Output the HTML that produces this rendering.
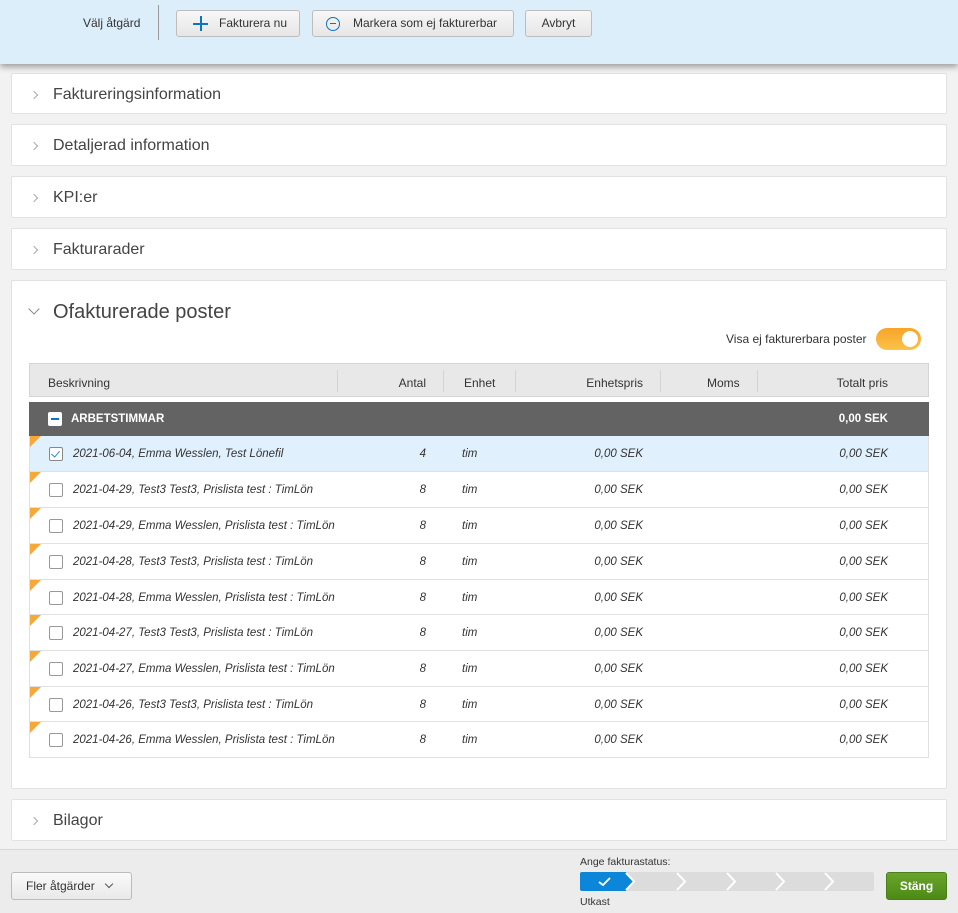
<!DOCTYPE html><html><head><style>
*{box-sizing:border-box;margin:0;padding:0}
body{width:958px;height:913px;background:#f2f2f2;font-family:"Liberation Sans",sans-serif;color:#333;position:relative;overflow:hidden;font-size:12px}
.top{position:absolute;left:0;top:0;width:958px;height:64px;background:#ddeefb;box-shadow:0 3px 6px rgba(0,0,0,.35);z-index:2}
.btn{position:absolute;top:10px;height:27px;border:1px solid #bdbdbd;border-radius:3px;background:linear-gradient(#f7f7f7,#e6e6e6);font-size:12px;color:#333;line-height:25px}
.panel{position:absolute;left:11px;width:936px;background:#fff;border:1px solid #e2e2e2;border-radius:2px}
.ph{font-size:16px;color:#444;position:absolute;left:41px}
.chev{position:absolute;left:19px;width:6px;height:6px;border-right:1.2px solid #aaa;border-top:1.2px solid #aaa;transform:rotate(45deg)}
.tbl{position:absolute;left:29px;width:900px}
.row{position:absolute;left:0;width:898px;height:36px;border-bottom:1px solid #e0e0e0;font-style:italic;font-size:11.5px;color:#333;background:#fff}
.row span,.hd span{position:absolute;top:12px}
.cb{position:absolute;left:19px;top:11px;width:14px;height:14px;border:1px solid #999;border-radius:2px;background:#fff}
.tri{position:absolute;left:0;top:0;width:0;height:0;border-top:11px solid #f6a93b;border-right:11px solid transparent}
.r{text-align:right}
</style></head><body>
<div class="top">
 <div style="position:absolute;left:83px;top:16px;font-size:12px;color:#333">Välj åtgärd</div>
 <div style="position:absolute;left:158px;top:5px;width:1px;height:35px;background:#999"></div>
 <div class="btn" style="left:176px;width:124px"><span style="position:absolute;left:16px;top:5px;width:15px;height:15px"><i style="position:absolute;left:7px;top:0;width:1.6px;height:15px;background:#0b74c4"></i><i style="position:absolute;left:0;top:7px;width:15px;height:1.6px;background:#0b74c4"></i></span><span style="position:absolute;left:42px">Fakturera nu</span></div>
 <div class="btn" style="left:312px;width:202px"><span style="position:absolute;left:13px;top:6px;width:14px;height:14px;border:1.3px solid #0b74c4;border-radius:50%"></span><span style="position:absolute;left:17px;top:12px;width:6px;height:1.3px;background:#0b74c4"></span><span style="position:absolute;left:40px">Markera som ej fakturerbar</span></div>
 <div class="btn" style="left:525px;width:67px;text-align:center">Avbryt</div>
</div>

<div class="panel" style="top:73px;height:41px"><span class="chev" style="top:18px"></span><span class="ph" style="top:12px">Faktureringsinformation</span></div>
<div class="panel" style="top:124px;height:42px"><span class="chev" style="top:18px"></span><span class="ph" style="top:12px">Detaljerad information</span></div>
<div class="panel" style="top:176px;height:42px"><span class="chev" style="top:18px"></span><span class="ph" style="top:12px">KPI:er</span></div>
<div class="panel" style="top:228px;height:42px"><span class="chev" style="top:18px"></span><span class="ph" style="top:12px">Fakturarader</span></div>
<div class="panel" style="top:280px;height:509px">
 <span style="position:absolute;left:18px;top:24px;width:8px;height:8px;border-right:1.3px solid #888;border-bottom:1.3px solid #888;transform:rotate(45deg)"></span>
 <span class="ph" style="top:20px;font-size:20px">Ofakturerade poster</span>
 <span style="position:absolute;left:714px;top:51px;font-size:12px;color:#333">Visa ej fakturerbara poster</span>
 <div style="position:absolute;left:864px;top:47px;width:45px;height:22px;border-radius:11px;background:linear-gradient(#f7a428,#fcc24a)"><div style="position:absolute;right:3px;top:3px;width:16px;height:16px;border-radius:50%;background:#fff"></div></div>
</div>
<div class="tbl" style="top:363px">
 <div class="hd" style="position:absolute;left:0;top:0;width:900px;height:34px;background:#e8e8e8;border:1px solid #d4d4d4;font-size:12px;color:#333">
  <span style="left:18px">Beskrivning</span>
  <i style="position:absolute;left:307px;top:6px;width:1px;height:22px;background:#d4d4d4"></i>
  <span style="left:320px;width:76px" class="r">Antal</span>
  <i style="position:absolute;left:413px;top:6px;width:1px;height:22px;background:#d4d4d4"></i>
  <span style="left:434px">Enhet</span>
  <i style="position:absolute;left:485px;top:6px;width:1px;height:22px;background:#d4d4d4"></i>
  <span style="left:500px;width:113px" class="r">Enhetspris</span>
  <i style="position:absolute;left:630px;top:6px;width:1px;height:22px;background:#d4d4d4"></i>
  <span style="left:677px">Moms</span>
  <i style="position:absolute;left:727px;top:6px;width:1px;height:22px;background:#d4d4d4"></i>
  <span style="left:740px;width:118px" class="r">Totalt pris</span>
 </div>
 <div style="position:absolute;left:0;top:39px;width:900px;height:34px;background:#636363;color:#fff;font-weight:bold;font-size:11.5px">
  <div style="position:absolute;left:19px;top:10px;width:14px;height:14px;background:#fff;border-radius:2px"><div style="position:absolute;left:3px;top:6px;width:8px;height:1.5px;background:#0b74c4"></div></div>
  <span style="position:absolute;left:42px;top:11px">ARBETSTIMMAR</span>
  <span style="position:absolute;right:41px;top:11px">0,00 SEK</span>
 </div>
</div>
<div class="tbl" style="top:436px;border-left:1px solid #e0e0e0;border-right:1px solid #e0e0e0;height:322px">
<div class="row" style="top:0;background:#e1f0fd"><i class="tri"></i><div class="cb" style="border-color:#888"><div style="position:absolute;left:3px;top:1px;width:5px;height:8px;border-right:1.5px solid #2a8ad8;border-bottom:1.5px solid #2a8ad8;transform:rotate(40deg)"></div></div><span style="left:43px">2021-06-04, Emma Wesslen, Test Lönefil</span><span style="left:360px;width:36px" class="r">4</span><span style="left:432px">tim</span><span style="left:500px;width:113px" class="r">0,00 SEK</span><span style="left:740px;width:118px" class="r">0,00 SEK</span></div>
<div class="row" style="top:36px"><i class="tri"></i><div class="cb"></div><span style="left:43px">2021-04-29, Test3 Test3, Prislista test : TimLön</span><span style="left:360px;width:36px" class="r">8</span><span style="left:432px">tim</span><span style="left:500px;width:113px" class="r">0,00 SEK</span><span style="left:740px;width:118px" class="r">0,00 SEK</span></div>
<div class="row" style="top:72px"><i class="tri"></i><div class="cb"></div><span style="left:43px">2021-04-29, Emma Wesslen, Prislista test : TimLön</span><span style="left:360px;width:36px" class="r">8</span><span style="left:432px">tim</span><span style="left:500px;width:113px" class="r">0,00 SEK</span><span style="left:740px;width:118px" class="r">0,00 SEK</span></div>
<div class="row" style="top:108px"><i class="tri"></i><div class="cb"></div><span style="left:43px">2021-04-28, Test3 Test3, Prislista test : TimLön</span><span style="left:360px;width:36px" class="r">8</span><span style="left:432px">tim</span><span style="left:500px;width:113px" class="r">0,00 SEK</span><span style="left:740px;width:118px" class="r">0,00 SEK</span></div>
<div class="row" style="top:144px;height:35px"><i class="tri"></i><div class="cb"></div><span style="left:43px">2021-04-28, Emma Wesslen, Prislista test : TimLön</span><span style="left:360px;width:36px" class="r">8</span><span style="left:432px">tim</span><span style="left:500px;width:113px" class="r">0,00 SEK</span><span style="left:740px;width:118px" class="r">0,00 SEK</span></div>
<div class="row" style="top:179px"><i class="tri"></i><div class="cb"></div><span style="left:43px">2021-04-27, Test3 Test3, Prislista test : TimLön</span><span style="left:360px;width:36px" class="r">8</span><span style="left:432px">tim</span><span style="left:500px;width:113px" class="r">0,00 SEK</span><span style="left:740px;width:118px" class="r">0,00 SEK</span></div>
<div class="row" style="top:215px"><i class="tri"></i><div class="cb"></div><span style="left:43px">2021-04-27, Emma Wesslen, Prislista test : TimLön</span><span style="left:360px;width:36px" class="r">8</span><span style="left:432px">tim</span><span style="left:500px;width:113px" class="r">0,00 SEK</span><span style="left:740px;width:118px" class="r">0,00 SEK</span></div>
<div class="row" style="top:251px;height:35px"><i class="tri"></i><div class="cb"></div><span style="left:43px">2021-04-26, Test3 Test3, Prislista test : TimLön</span><span style="left:360px;width:36px" class="r">8</span><span style="left:432px">tim</span><span style="left:500px;width:113px" class="r">0,00 SEK</span><span style="left:740px;width:118px" class="r">0,00 SEK</span></div>
<div class="row" style="top:286px"><i class="tri"></i><div class="cb"></div><span style="left:43px">2021-04-26, Emma Wesslen, Prislista test : TimLön</span><span style="left:360px;width:36px" class="r">8</span><span style="left:432px">tim</span><span style="left:500px;width:113px" class="r">0,00 SEK</span><span style="left:740px;width:118px" class="r">0,00 SEK</span></div>
</div>
<div class="panel" style="top:799px;height:42px"><span class="chev" style="top:18px"></span><span class="ph" style="top:12px">Bilagor</span></div>

<div style="position:absolute;left:0;top:849px;width:958px;height:64px;background:#ececec;border-top:1px solid #d8d8d8">
 <div style="position:absolute;left:11px;top:22px;width:121px;height:28px;border:1px solid #bbb;border-radius:3px;background:linear-gradient(#fafafa,#e9e9e9);font-size:12px;line-height:26px;padding-left:14px">Fler åtgärder <span style="display:inline-block;width:6px;height:6px;border-right:1.3px solid #555;border-bottom:1.3px solid #555;transform:rotate(45deg);margin-left:8px;position:relative;top:-3px"></span></div>
 <div style="position:absolute;left:580px;top:6px;font-size:10.5px">Ange fakturastatus:</div>
 <svg style="position:absolute;left:580px;top:22px" width="295" height="20">
  <rect x="0" y="0" width="294" height="19" rx="2" fill="#dcdcdc"/>
  <path d="M2 0H46L54 9.5L46 19H2Q0 19 0 17V2Q0 0 2 0Z" fill="#0b86d9"/>
  <path d="M19 10l4 3 7-7" stroke="#fff" stroke-width="1.8" fill="none"/>
  <g stroke="#fff" stroke-width="2" fill="none"><path d="M46 1l8 8.5-8 8.5"/><path d="M97 1l8 8.5-8 8.5"/><path d="M147 1l8 8.5-8 8.5"/><path d="M196 1l8 8.5-8 8.5"/><path d="M245 1l8 8.5-8 8.5"/></g>
 </svg>
 <div style="position:absolute;left:580px;top:46px;font-size:10.5px">Utkast</div>
 <div style="position:absolute;left:886px;top:22px;width:61px;height:28px;border-radius:3px;background:linear-gradient(#6aa52a,#4b8a16);border:1px solid #4a7f1c;color:#fff;font-weight:bold;font-size:12px;text-align:center;line-height:26px">Stäng</div>
</div>
</body></html>
